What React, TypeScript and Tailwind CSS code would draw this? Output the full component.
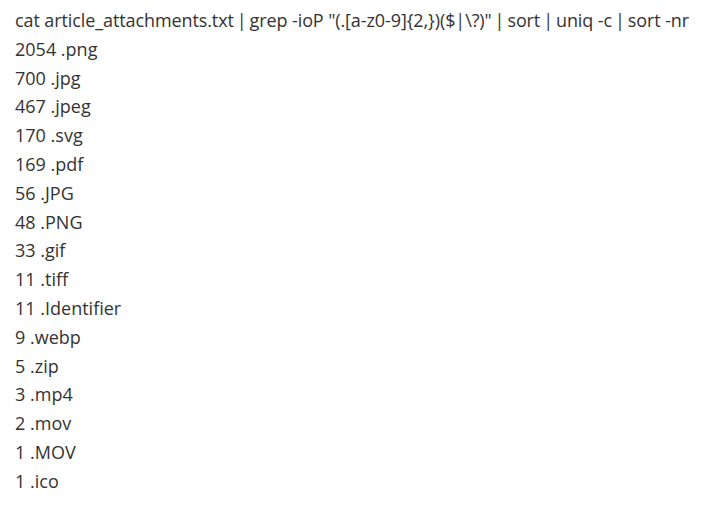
import React from 'react';

const ROWS: [number, string][] = [
  [2054, '.png'],
  [700, '.jpg'],
  [467, '.jpeg'],
  [170, '.svg'],
  [169, '.pdf'],
  [56, '.JPG'],
  [48, '.PNG'],
  [33, '.gif'],
  [11, '.tiff'],
  [11, '.Identifier'],
  [9, '.webp'],
  [5, '.zip'],
  [3, '.mp4'],
  [2, '.mov'],
  [1, '.MOV'],
  [1, '.ico'],
];

const Pipe = () => <span className="ml-[3px] mr-[3px]">|</span>;

const App: React.FC = () => {
  return (
    <div className="min-h-[510px] bg-white px-[15px] pt-[6px] text-[18px] leading-[28.8px] text-[#333333] font-['Open_Sans',sans-serif]">
      <div className="whitespace-nowrap tracking-[-0.1px]">
        cat article_attachments.txt<Pipe />grep -ioP "(.[a-z0-9]{'{'}2,{'}'})($|\?)"<Pipe />sort<Pipe />uniq -c<Pipe />sort -nr
      </div>
      {ROWS.map(([count, ext], i) => (
        <div key={i} className="whitespace-nowrap">
          {count} {ext}
        </div>
      ))}
    </div>
  );
};

export default App;
